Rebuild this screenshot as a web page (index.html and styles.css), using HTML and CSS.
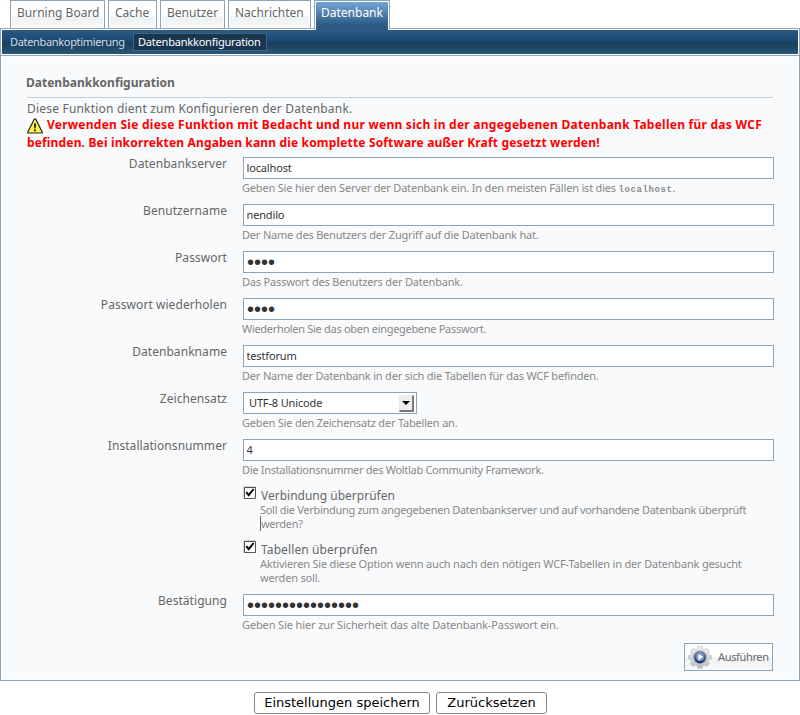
FILE: index.html
```html
<!DOCTYPE html>
<html lang="de">
<head>
<meta charset="utf-8">
<title>Datenbankkonfiguration</title>
<link rel="stylesheet" href="styles.css">
</head>
<body>
<ul class="tabs">
  <li class="tab tab-board"><span>Burning Board</span></li>
  <li class="tab tab-cache"><span>Cache</span></li>
  <li class="tab tab-user"><span>Benutzer</span></li>
  <li class="tab tab-news"><span>Nachrichten</span></li>
  <li class="tab tab-db active"><span>Datenbank</span></li>
</ul>
<nav class="subnav">
  <div class="bar">
    <a class="sub">Datenbankoptimierung</a>
    <a class="sub current">Datenbankkonfiguration</a>
  </div>
</nav>
<main class="panel">
  <h3><span>Datenbankkonfiguration</span></h3>
  <p class="intro"><span>Diese Funktion dient zum Konfigurieren der Datenbank.</span></p>
  <p class="warning"><svg class="warn-icon" width="16" height="16" viewBox="0 0 16 16"><path d="M7.2 1.2h1.6L15.2 14v1H.8v-1z" fill="#fff04a" stroke="#222" stroke-width="1.2" stroke-linejoin="round"/><path d="M7 5.5h2l-.4 5H7.4zM7.1 11.5h1.8v1.7H7.1z" fill="#111"/></svg><span class="w1">Verwenden Sie diese Funktion mit Bedacht und nur wenn sich in der angegebenen Datenbank Tabellen für das WCF</span><br><span class="w2">befinden. Bei inkorrekten Angaben kann die komplette Software außer Kraft gesetzt werden!</span></p>
  <form class="form">
    <div class="row"><label><span>Datenbankserver</span></label><div class="field"><input type="text" value="localhost"><p class="help"><span>Geben Sie hier den Server der Datenbank ein. In den meisten Fällen ist dies </span><code>localhost</code>.</p></div></div>
    <div class="row"><label><span>Benutzername</span></label><div class="field"><input type="text" value="nendilo"><p class="help"><span>Der Name des Benutzers der Zugriff auf die Datenbank hat.</span></p></div></div>
    <div class="row"><label><span>Passwort</span></label><div class="field"><input type="password" value="abcd"><p class="help"><span>Das Passwort des Benutzers der Datenbank.</span></p></div></div>
    <div class="row"><label><span>Passwort wiederholen</span></label><div class="field"><input type="password" value="abcd"><p class="help tight"><span>Wiederholen Sie das oben eingegebene Passwort.</span></p></div></div>
    <div class="row"><label><span>Datenbankname</span></label><div class="field"><input type="text" value="testforum"><p class="help"><span>Der Name der Datenbank in der sich die Tabellen für das WCF befinden.</span></p></div></div>
    <div class="row"><label><span>Zeichensatz</span></label><div class="field"><div class="select"><span>UTF-8 Unicode</span><i class="drop"></i></div><p class="help"><span>Geben Sie den Zeichensatz der Tabellen an.</span></p></div></div>
    <div class="row"><label><span>Installationsnummer</span></label><div class="field"><input type="text" value="4"><p class="help tight"><span>Die Installationsnummer des Woltlab Community Framework.</span></p></div></div>
    <div class="check"><svg class="box" width="13" height="13" viewBox="0 0 13 13"><path d="M0 0h13v13H0z" fill="#d4d4d4"/><path d="M1.5 1.5h11v11h-11z" fill="#fff" stroke="#555"/><path d="M3.3 6.2 5.7 9.2 10.6 3" fill="none" stroke="#000" stroke-width="2"/></svg><div><p class="opt"><span>Verbindung überprüfen</span></p><p class="help tight"><span>Soll die Verbindung zum angegebenen Datenbankserver und auf vorhandene Datenbank überprüft</span><br><span class="caret">werden?</span></p></div></div>
    <div class="check"><svg class="box" width="13" height="13" viewBox="0 0 13 13"><path d="M0 0h13v13H0z" fill="#d4d4d4"/><path d="M1.5 1.5h11v11h-11z" fill="#fff" stroke="#555"/><path d="M3.3 6.2 5.7 9.2 10.6 3" fill="none" stroke="#000" stroke-width="2"/></svg><div><p class="opt wide"><span>Tabellen überprüfen</span></p><p class="help"><span>Aktivieren Sie diese Option wenn auch nach den nötigen WCF-Tabellen in der Datenbank gesucht</span><br><span>werden soll.</span></p></div></div>
    <div class="row"><label><span>Bestätigung</span></label><div class="field"><input type="password" value="abcdefghijklmnop"><p class="help loose"><span>Geben Sie hier zur Sicherheit das alte Datenbank-Passwort ein.</span></p></div></div>
    <div class="run"><svg width="26" height="26" viewBox="0 0 26 26"><defs><linearGradient id="g" x2="0" y2="1"><stop offset="0" stop-color="#eee"/><stop offset="1" stop-color="#bbb"/></linearGradient><linearGradient id="b" x2="0" y2="1"><stop offset="0" stop-color="#8298c4"/><stop offset="1" stop-color="#12306b"/></linearGradient></defs><path d="M10.6 1.5h4.8l.6 3 1.7.7 2.6-1.7 3.2 3.2-1.7 2.6.7 1.7 3 .6v3.8l-3 .6-.7 1.7 1.7 2.6-3.2 3.2-2.6-1.7-1.7.7-.6 3h-4.8l-.6-3-1.7-.7-2.6 1.7-3.2-3.2 1.7-2.6-.7-1.7-3-.6v-3.8l3-.6.7-1.7-1.7-2.6 3.2-3.2 2.6 1.7 1.7-.7z" transform="translate(1 1) scale(.92)" fill="url(#g)" stroke="#bbb" stroke-width=".7"/><circle cx="13" cy="13" r="6.4" fill="url(#b)"/><circle cx="13" cy="13" r="3.9" fill="#8495b9"/><path d="M11.4 9.8v6.4l4.8-3.2z" fill="#fff"/></svg><span>Ausführen</span></div>
  </form>
</main>
<div class="buttons"><button class="save"><span>Einstellungen speichern</span></button><button class="reset"><span>Zurücksetzen</span></button></div>
</body>
</html>
```
FILE: styles.css
```css
* { box-sizing: border-box; }
body { margin: 0; width: 800px; height: 715px; overflow: hidden; background: #fff; color: #666; font: 12px/18px "Noto Sans", sans-serif; }
p, h3, ul { margin: 0; padding: 0; }
.tabs { list-style: none; display: flex; height: 28px; padding-left: 10px; }
.tab { height: 28px; margin-right: 3px; border: 1px solid #8da4b7; border-bottom: 0; padding: 3px 0 0 6px; white-space: nowrap; background: linear-gradient(#fff 15px, #eef1f3 16px, #f8f9f9 28px); box-shadow: inset 0 0 0 1px #fff; }
.tab-board { width: 95px; }
.tab-cache { width: 49px; }
.tab-user { width: 65px; }
.tab-news { width: 83px; }
.tab-db { width: 76px; }
.active { position: relative; height: 30px; color: #fff; border-color: #8da4b7; background: linear-gradient(#75a6d5 1px, #2b5a84 24px, #2b5a84); box-shadow: inset 1px 1px #fff, inset -1px 0 #fff; }
.subnav { height: 28px; border: 1px solid #8da4b7; padding: 1px; }
.bar { height: 24px; display: flex; align-items: center; padding-left: 8px; background: linear-gradient(#2b5a84, #194a73 45%, #1b3d5c 53%, #295779); }
.sub { color: #d3dde5; font-size: 11px; line-height: 16px; white-space: nowrap; width: 115px; letter-spacing: -.33px; }
.current { margin-left: 8px; width: 134px; height: 18px; border: 1px solid #406583; background: #1a354e; color: #fff; padding-left: 4px; line-height: 15px; letter-spacing: -.2px; }
.panel { height: 625px; border: 1px solid #8da4b7; border-top: 0; padding: 17px 26px 0; background: #f9fafc; box-shadow: inset 0 0 0 1px #fff; }
h3 { height: 25px; border-bottom: 1px solid #c3ced9; font-size: 12px; line-height: 19px; }
h3 span { margin-left: -1px; }
.intro { height: 18px; line-height: 21px; letter-spacing: .2px; }
.warning { height: 36px; color: #f00; font-weight: bold; white-space: nowrap; }
.w1 { letter-spacing: .25px; }
.w2 { letter-spacing: .16px; }
.warn-icon { vertical-align: -5px; margin-right: 4px; }
.form { margin-top: 5px; }
.row { display: grid; grid-template-columns: 200px 531px; column-gap: 16px; height: 47px; }
label { text-align: right; line-height: 14px; white-space: nowrap; letter-spacing: .06px; }
input { display: block; width: 531px; height: 22px; margin: 0; padding: 0 3px 2px 2.5px; border: 1px solid #8da4b7; background: #fff; color: #333; font: 11px "Noto Sans", sans-serif; letter-spacing: -.15px; outline: 0; }
input[type="password"] { font: 20px/18px "Liberation Sans", sans-serif; padding: 0 3px; letter-spacing: 0; }
.help { font-size: 11px; line-height: 14px; color: #888; white-space: nowrap; padding-top: 2px; margin-left: -1px; letter-spacing: -.19px; }
.tight { letter-spacing: -.3px; }
.loose { letter-spacing: -.12px; }
code { font: bold 9px "Liberation Mono", monospace; letter-spacing: .6px; }
.select { display: flex; align-items: center; width: 174px; height: 22px; padding: 0 2px 0 5px; justify-content: space-between; border: 1px solid #8da4b7; background: #fff; color: #333; font-size: 11px; letter-spacing: -.15px; }
.drop { width: 15px; height: 17px; border: 1px solid #e8e8e8; border-right: 2px solid #777; border-bottom: 2px solid #777; background: #eee; display: grid; place-items: center; }
.drop::after { content: ""; border: 4px solid transparent; border-top-color: #000; border-bottom: 0; }
.check { display: flex; height: 54px; padding-left: 216px; gap: 5px; }
.box { flex: none; }
.opt { height: 17px; line-height: 19px; }
.wide { letter-spacing: .1px; }
.check .help { padding: 0; margin-left: -1px; }
.caret { margin-left: 1px; box-shadow: -1px 0 #666; }
.run { display: flex; align-items: center; gap: 5px; width: 89px; height: 28px; margin: 2px 0 0 657px; padding-left: 2px; border: 1px solid #8da4b7; background: linear-gradient(#fff 50%, #eef1f3 55%, #f9fafa); font-size: 11px; line-height: 17px; letter-spacing: -.35px; white-space: nowrap; }
.run span { padding-bottom: 2px; }
.buttons { display: flex; gap: 6px; padding: 11px 0 0 254px; }
button { height: 22px; padding: 0; border: 1px solid #888; border-radius: 3px; background: #fff; color: #000; font: 13px/20px "DejaVu Sans", sans-serif; white-space: nowrap; }
.save { width: 176px; }
.reset { width: 111px; }
```
